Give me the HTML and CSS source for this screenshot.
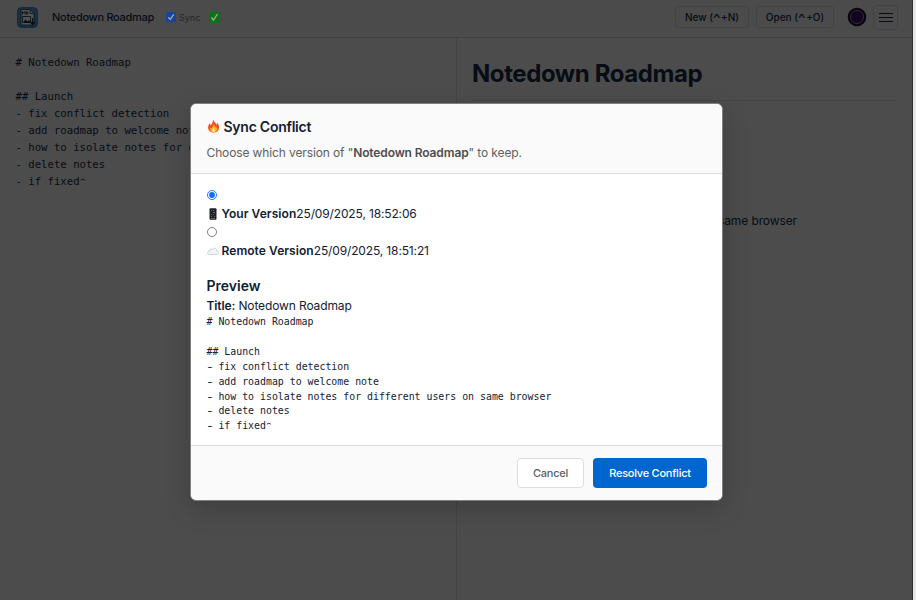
FILE: index.html
```
<!DOCTYPE html>
<html lang="en">
<head>
<meta charset="utf-8">
<title>Notedown Roadmap</title>
<link rel="stylesheet" href="styles.css">
</head>
<body>
<div class="app">
  <header class="topbar">
    <svg class="logo" viewBox="0 0 23 23"><rect x="1.500" y="1.500" width="20" height="20" rx="4" fill="#1a3041" stroke="#14293b"/><path d="M5 3.500h9l4 4V19H5z" fill="#4f5356" stroke="#0b1219" stroke-width=".8"/><path d="M14 3.500v4h4" fill="none" stroke="#0b1219" stroke-width=".8"/><path d="M6.500 8.500V5.500l1.300 1.600 1.300-1.600v3M10.700 5.700v2.600c1.700 0 1.700-2.600 0-2.600" fill="none" stroke="#080d12" stroke-width=".9"/><path d="M6.500 10.500h8v6h-8z" fill="none" stroke="#080d12" stroke-width=".8"/><path d="M7 16.500l2.500-3 2 2 1.500-1.500 1.500 2.500z" fill="#080d12"/><path d="M16.500 12v6M14.300 16l2.200 2.500 2.200-2.500" fill="none" stroke="#080d12" stroke-width="1.200"/></svg>
    <span class="doc-name">Notedown Roadmap</span>
    <svg class="check" viewBox="0 0 10 10"><rect width="10" height="10" rx="1.500" fill="#14459a"/><path d="M2.300 5.200l2 2.200 3.500-5" fill="none" stroke="#a0a8b4" stroke-width="1.300"/></svg>
    <span class="sync">Sync</span>
    <svg class="status" viewBox="0 0 11 11"><rect width="11" height="11" rx="1.500" fill="#087515"/><path d="M2.500 5.500l2 2.700 4-6.200" fill="none" stroke="#a2aaa2" stroke-width="1.300"/></svg>
    <div class="actions">
      <span class="tool new">New (<span class="hat">^</span>+N)</span>
      <span class="tool open">Open (<span class="hat">^</span>+O)</span>
      <svg class="avatar" viewBox="0 0 20 20"><circle cx="10" cy="10" r="9.300" fill="#090411"/><circle cx="10" cy="10" r="6.500" fill="#110421" stroke="#49342f" stroke-width=".8"/></svg>
      <span class="menu"><svg viewBox="0 0 14 11"><path d="M0 1.500h14M0 5.500h14M0 9.500h14" stroke="#080c12" stroke-width="1.200"/></svg></span>
    </div>
  </header>
  <main class="panes">
    <pre class="editor"># Notedown Roadmap

## Launch
- fix conflict detection
- add roadmap to welcome note
- how to isolate notes for different users on same browser
- delete notes
- if fixed<svg class="caret" viewBox="0 0 6 8"><path d="M.8 3.200l2-1 2 1" fill="none" stroke="currentColor" stroke-width=".9"/></svg></pre>
    <section class="rendered">
      <h1>Notedown Roadmap</h1>
      <p class="item">how to isolate notes for different users on same browser</p>
    </section>
  </main>
</div>
<div class="backdrop">
  <div class="modal">
    <div class="modal-head">
      <h2><svg class="fire" viewBox="0 0 14 16"><path d="M6.500.5c.8 2.500 3.500 4 3.800 6.200.7-.7 1-1.600.9-2.700 1.700 2 2.300 4 2.100 6.200-.4 3.300-2.900 5.300-6.300 5.300S1.100 13.600.8 10.400C.6 8 1.800 6.300 2.300 4.800c.8.7 1.200 1.600 1.300 2.500C5.300 5.500 6.500 3 6.500.5z" fill="#f4511e"/><path d="M7 5.500c.4 2 2.700 3 2.900 5 .5-.4.800-1 .8-1.600 1.500 3 .3 6-3.500 6-3.400 0-4.600-2.700-3.500-5.200.4.400.7.700.9 1.200C6 9.500 7 7.700 7 5.500z" fill="#ffb020"/><path d="M7 10c2 2 2.200 4.500 0 4.700-2.200-.2-2-2.800 0-4.700z" fill="#fff0a0"/></svg>Sync Conflict</h2>
      <p>Choose which version of "<b>Notedown Roadmap</b>" to keep.</p>
    </div>
    <div class="modal-body">
      <div class="radio-row"><svg class="radio" viewBox="0 0 10 10"><circle cx="5" cy="5" r="4.500" fill="#fff" stroke="#0b6cff" stroke-width=".9"/><circle cx="5" cy="5" r="2.900" fill="#0b6cff"/></svg></div>
      <div class="version"><svg class="emoji" viewBox="0 0 12 12"><rect x="2.500" y=".3" width="7" height="11.500" rx="1" fill="#202227"/><path d="M4 2.500h1M6 2.500h1M4 6.500h1M7 8.500h1" stroke="#a34842"/><path d="M6 4.500h2M4 8.500h1M6 6.500h1" stroke="#3d7b5b"/><path d="M4 10.500h4" stroke="#577082" stroke-width=".8"/></svg><b>Your Version</b><span>25/09/2025, 18:52:06</span></div>
      <div class="radio-row"><svg class="radio" viewBox="0 0 10 10"><circle cx="5" cy="5" r="4.500" fill="#fff" stroke="#737373" stroke-width=".9"/></svg></div>
      <div class="version"><svg class="emoji" viewBox="0 0 12 12"><path d="M2.800 9.500C-.2 9.500-.1 6 2.400 6c0-2 2-2.700 3-1.500 1.500-2.500 4.800-1.200 4.300 1.500 2.500 0 2.600 3.500 0 3.500z" fill="#f1f3f6" stroke="#c3cad3" stroke-width=".8"/></svg><b>Remote Version</b><span>25/09/2025, 18:51:21</span></div>
      <h3>Preview</h3>
      <div class="preview-title"><b>Title:</b> Notedown Roadmap</div>
      <pre class="preview"># Notedown Roadmap

## Launch
<span class="dash">-</span> fix conflict detection
<span class="dash">-</span> add roadmap to welcome note
<span class="dash">-</span> how to isolate notes for different users on same browser
<span class="dash">-</span> delete notes
<span class="dash">-</span> if fixed<svg class="caret" viewBox="0 0 6 8"><path d="M.8 3.200l2-1 2 1" fill="none" stroke="currentColor" stroke-width=".9"/></svg></pre>
    </div>
    <div class="modal-foot">
      <span class="btn cancel">Cancel</span>
      <span class="btn resolve">Resolve Conflict</span>
    </div>
  </div>
</div>
</body>
</html>
```
FILE: styles.css
```
* { box-sizing: border-box; }
body {
  margin: 0;
  width: 916px;
  height: 600px;
  overflow: hidden;
  background: #e8e8e8;
  font-family: Inter, sans-serif;
  color: #122033;
}
h1, h2, h3, p, pre { margin: 0; }
svg { display: block; flex: none; }
.app {
  width: 913px;
  height: 600px;
  background: #4c4c4c;
  border-right: 1px solid #303030;
  color: #080d15;
  display: flex;
  flex-direction: column;
}
.topbar {
  height: 38px;
  flex: none;
  display: flex;
  align-items: center;
  padding: 0 14px 3px 16px;
  background: #4b4b4b;
  border-bottom: 1px solid #414141;
}
.logo { width: 23px; height: 23px; }
.doc-name { margin-left: 13px; width: 114px; font-size: 11px; font-weight: 500; letter-spacing: -.29px; white-space: nowrap; }
.check { width: 10px; height: 10px; }
.sync { margin-left: 3px; width: 30px; font-size: 9px; color: #282828; }
.status { width: 11px; height: 11px; }
.actions { margin-left: auto; display: flex; align-items: center; }
.tool, .menu {
  border: 1px solid #434343;
  border-radius: 3px;
  display: flex;
  align-items: center;
  justify-content: center;
}
.tool { height: 22px; font-size: 10px; font-weight: 500; white-space: pre; }
.hat { font-size: 12px; font-weight: 400; line-height: 10px; padding-top: 2px; margin: 0 1.3px; transform: scaleX(1.4); }
.new { width: 74px; margin-right: 7px; }
.open { width: 78px; margin-right: 13px; }
.avatar { width: 20px; height: 20px; margin-right: 6px; }
.menu { width: 25px; height: 25px; }
.menu svg { width: 14px; height: 11px; }
.panes { flex: 1; display: grid; grid-template-columns: 457px 1fr; }
pre { font-family: "DejaVu Sans Mono", monospace; }
.editor {
  padding: 15.5px 0 0 15.5px;
  border-right: 1px solid #434343;
  font-size: 10.65px;
  line-height: 17.05px;
  overflow: hidden;
}
.caret { display: inline-block; width: 6px; height: 8px; vertical-align: 0; }
.rendered { padding: 16px 15px 0; }
.rendered h1 {
  height: 47px;
  font-size: 24px;
  line-height: 40px;
  font-weight: 700;
  letter-spacing: -.42px;
  white-space: nowrap;
  border-bottom: 1px solid #454545;
}
.item {
  display: flex;
  justify-content: flex-end;
  margin-top: 111px;
  width: 325px;
  font-size: 12px;
  line-height: 18px;
  letter-spacing: -.1px;
  white-space: nowrap;
}
.backdrop {
  position: absolute;
  inset: 0 3px 0 0;
  display: flex;
  justify-content: center;
  align-items: flex-start;
  padding-top: 103px;
}
.modal {
  width: 533px;
  height: 398px;
  background: #fff;
  background-clip: padding-box;
  border: 1px solid #808080;
  border-radius: 6px;
  overflow: hidden;
  box-shadow: 0 8px 26px rgba(0, 0, 0, .18);
  display: flex;
  flex-direction: column;
}
.modal-head { height: 70px; padding: 12px 15.5px 0; background: #fafafa; border-bottom: 1px solid #ddd; }
.modal-head h2 { display: flex; align-items: center; height: 20px; font-size: 14px; font-weight: 600; letter-spacing: -.25px; }
.fire { width: 13px; height: 14px; margin-right: 4px; }
.modal-head p { margin-top: 8px; font-size: 12px; line-height: 18px; letter-spacing: -.12px; color: #606060; }
.modal-head b { color: #4d4d4d; }
.modal-body { flex: 1; padding: 12px 15.5px 0; font-size: 12px; }
b { font-weight: 600; }
.radio-row { height: 18px; display: flex; align-items: center; }
.radio { width: 10px; height: 10px; }
.version { height: 19px; display: flex; align-items: center; white-space: nowrap; letter-spacing: -.14px; }
.version b { letter-spacing: .06px; }
.emoji { width: 12px; height: 12px; margin-right: 3px; }
.modal-body h3 { margin-top: 16px; font-size: 14px; line-height: 20px; font-weight: 600; }
.preview-title { margin-top: 1px; line-height: 18px; letter-spacing: -.12px; }
.preview { font-size: 9.9px; line-height: 14.85px; padding-top: .3px; }
.dash { display: inline-block; transform: scaleX(1.5); }
.modal-foot {
  height: 55px;
  padding: 0 15px;
  background: #fafafa;
  border-top: 1px solid #ddd;
  display: flex;
  align-items: center;
  justify-content: flex-end;
  gap: 9px;
}
.btn {
  height: 30px;
  border-radius: 4px;
  font-size: 11px;
  font-weight: 500;
  letter-spacing: -.25px;
  display: flex;
  align-items: center;
  justify-content: center;
  white-space: nowrap;
}
.cancel { width: 67px; background: #fff; border: 1px solid #ddd; color: #606060; }
.resolve { width: 114px; background: #0066cf; color: #fff; }
```
